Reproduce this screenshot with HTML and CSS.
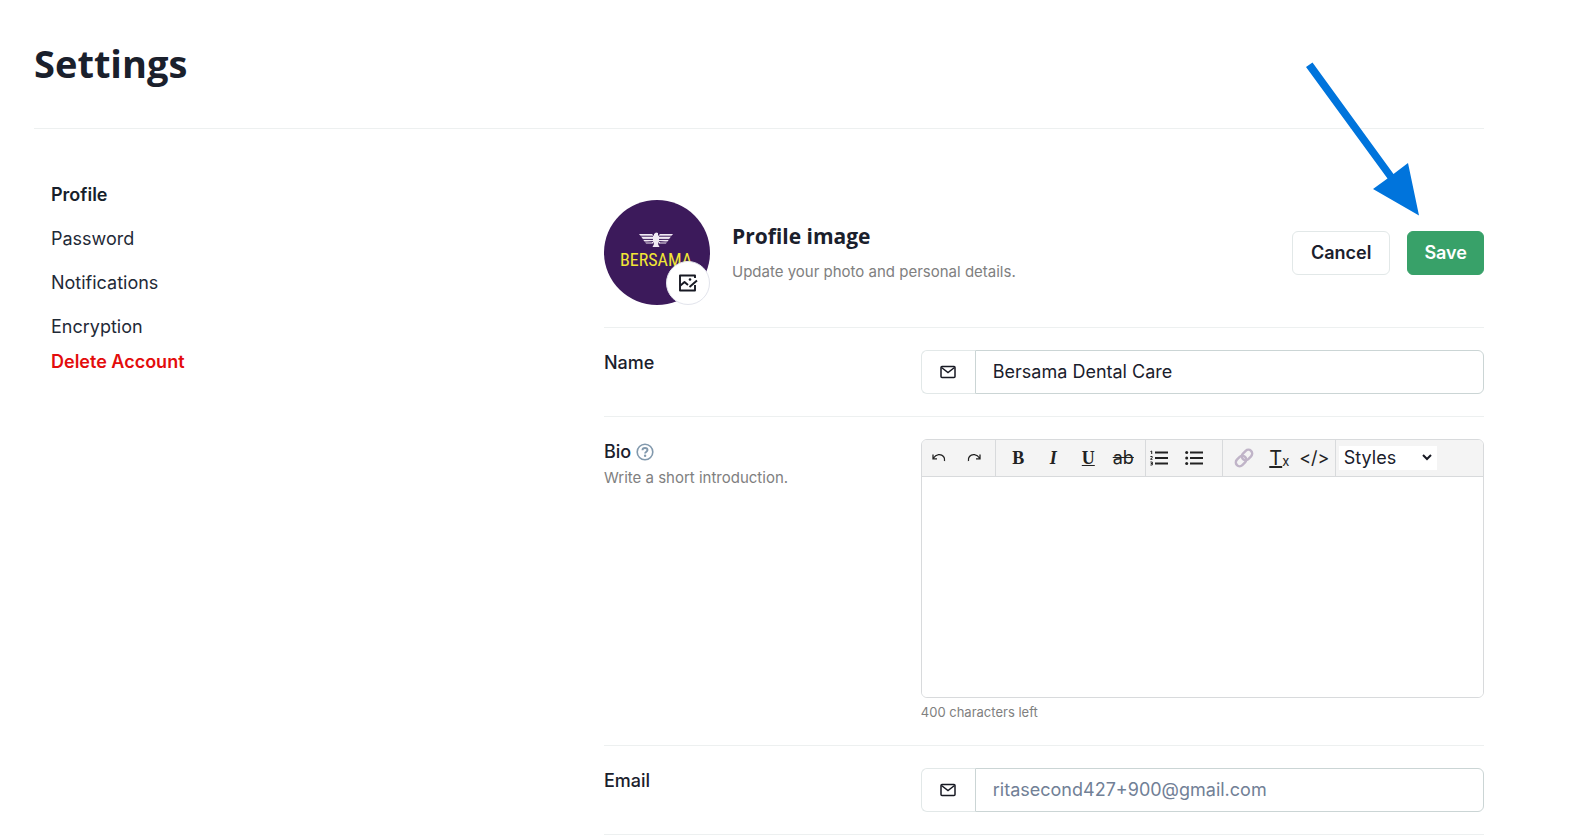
FILE: index.html
```html
<!DOCTYPE html>
<html lang="en">
<head>
<meta charset="utf-8">
<title>Settings</title>
<link rel="stylesheet" href="styles.css">
</head>
<body>
<div class="page">
  <header class="page-header"><h1>Settings</h1></header>
  <div class="layout">
    <nav class="nav" aria-label="Settings sections">
      <a class="nav-link active" href="#profile">Profile</a>
      <a class="nav-link" href="#password">Password</a>
      <a class="nav-link" href="#notifications">Notifications</a>
      <a class="nav-link" href="#encryption">Encryption</a>
      <a class="nav-link danger" href="#delete">Delete Account</a>
    </nav>
    <main class="content">
      <section class="profile">
        <div class="avatar">
          <svg class="avatar-logo" viewBox="0 0 106 105" role="img" aria-label="Bersama">
            <ellipse cx="53" cy="52.500" rx="53" ry="52.500" fill="#3c1a5b"/>
            <g fill="#f1eaf4">
              <path d="M35 34h13l3 3v2H39zM38 37.500h1l10 2.500v1H40zM40 40.500l9 1.500v1.500h-7z"/>
              <path d="M69 34H56l-3 3v2h12zM66 37.500h-1L55 40v1h9zM64 40.500L55 42v1.500h7z"/>
              <path d="M50 34l2-1.500 2 .5v4l2 2-2 5h-4l-2-5 2-2z"/>
              <path d="M50.500 43h3l2 4h-7z"/>
            </g>
            <g stroke="#3c1a5b" stroke-width="1"><path d="M36 36.200h13M39 39.400h10M68 36.200H55M65 39.400H55M41 42h7M63 42h-7"/></g>
            <text class="logo-text" x="52" y="66" text-anchor="middle">BERSAMA</text>
          </svg>
          <button class="avatar-edit" type="button" aria-label="Change image">
            <svg width="20" height="18" viewBox="0 0 20 18" fill="none" stroke="#171923" stroke-width="1.900" stroke-linejoin="round">
              <path d="M17 4V1.500H2v15h15V11"/>
              <path d="M2.500 11.500l4-3.500 3.500 3"/>
              <path d="M11.500 13l7.500-6.500"/>
              <circle cx="12" cy="5.500" r="1.300" fill="#171923" stroke="none"/>
            </svg>
          </button>
        </div>
        <div class="profile-text">
          <h2>Profile image</h2>
          <p class="hint">Update your photo and personal details.</p>
        </div>
        <div class="actions">
          <button class="btn" type="button">Cancel</button>
          <button class="btn primary" type="button">Save</button>
          <svg class="arrow" width="120" height="156" viewBox="0 0 120 156" fill="#0074dc" aria-hidden="true">
            <path d="M6 7l6.500-4.500L93.500 114l14.500-11 11 52.500L73 129l14.500-10.500z"/>
          </svg>
        </div>
      </section>

      <div class="row">
        <div class="row-label"><label for="name">Name</label></div>
        <div class="field">
          <span class="addon"><svg width="16" height="14" viewBox="0 0 16 14" fill="none" stroke="#171923" stroke-width="1.500"><rect x="1" y="1.500" width="14" height="11" rx="1"/><path d="M1.500 2.500L8 7.500l6.500-5"/></svg></span>
          <input id="name" type="text" value="Bersama Dental Care">
        </div>
      </div>

      <div class="row">
        <div class="row-label">
          <label for="bio">Bio
            <svg class="help" width="18" height="18" viewBox="0 0 18 18" fill="none" stroke="#8299ad" aria-hidden="true"><circle cx="9" cy="9" r="7.800" stroke-width="1.600"/><path d="M6.500 7.200C6.500 5.700 7.600 5 9 5s2.500.8 2.500 2.100C11.500 8.700 9.100 8.700 9.100 10.600" stroke-width="1.900"/><circle cx="9.100" cy="12.800" r="1.200" fill="#8299ad" stroke="none"/></svg>
          </label>
          <p class="hint">Write a short introduction.</p>
        </div>
        <div>
          <div class="editor">
            <div class="toolbar">
              <div class="group history">
                <button type="button" aria-label="Undo"><svg width="14" height="10" viewBox="0 0 14 10" fill="none" stroke="#222" stroke-width="1.300"><path d="M1.500 5C4 1 9 .5 11.500 3.500c1.500 1.700 1.300 3 1 4.500M1 1.500v4.300h4"/></svg></button>
                <button type="button" aria-label="Redo"><svg width="14" height="10" viewBox="0 0 14 10" fill="none" stroke="#222" stroke-width="1.300"><path d="M12.500 5C10 1 5 .5 2.500 3.500 1 5.200 1.200 6.500 1.500 8M13 1.500v4.300H9"/></svg></button>
              </div>
              <div class="group inline">
                <button class="bold" type="button" aria-label="Bold">B</button>
                <button class="italic" type="button" aria-label="Italic">I</button>
                <button class="underline" type="button" aria-label="Underline">U</button>
                <button class="strike" type="button" aria-label="Strikethrough">ab</button>
              </div>
              <div class="group lists">
                <button type="button" aria-label="Numbered list"><svg width="18" height="16" viewBox="0 0 18 16" fill="none" stroke="#222"><path d="M5 2.500h13M5 8h13M5 13.500h13" stroke-width="1.800"/><path d="M.5 1.500L1.700 1v3M.4 6.500h1.800v1L.5 9.300h2M.4 12h1.900v3H.4M.8 13.500h1.500" stroke-width="1"/></svg></button>
                <button type="button" aria-label="Bulleted list"><svg width="18" height="16" viewBox="0 0 18 16" fill="#222"><path d="M5 1.600h13v1.800H5zM5 7.100h13v1.800H5zM5 12.600h13v1.800H5z"/><circle cx="1.700" cy="2.500" r="1.500"/><circle cx="1.700" cy="8" r="1.500"/><circle cx="1.700" cy="13.500" r="1.500"/></svg></button>
              </div>
              <div class="group insert">
                <button type="button" aria-label="Link"><svg width="20" height="20" viewBox="0 0 20 20" fill="none" stroke="#c0b4c8" stroke-width="2.400"><g transform="rotate(-45 10 10)"><rect x="0" y="6.200" width="11.500" height="7.600" rx="3.800"/><rect x="8.500" y="6.200" width="11.500" height="7.600" rx="3.800"/></g></svg></button>
                <button class="clear" type="button" aria-label="Clear formatting"><span>T</span><small>x</small></button>
                <button class="code" type="button" aria-label="Source code">&lt;/&gt;</button>
              </div>
              <div class="styles">
                <select aria-label="Styles"><option>Styles</option></select>
                <svg class="chevron" width="10" height="7" viewBox="0 0 10 7" fill="none" stroke="#171923" stroke-width="2" aria-hidden="true"><path d="M1 1l4 4 4-4"/></svg>
              </div>
            </div>
            <textarea id="bio"></textarea>
          </div>
          <p class="counter">400 characters left</p>
        </div>
      </div>

      <div class="row">
        <div class="row-label"><label for="email">Email</label></div>
        <div class="field">
          <span class="addon"><svg width="16" height="14" viewBox="0 0 16 14" fill="none" stroke="#171923" stroke-width="1.500"><rect x="1" y="1.500" width="14" height="11" rx="1"/><path d="M1.500 2.500L8 7.500l6.500-5"/></svg></span>
          <input id="email" type="email" placeholder="ritasecond427+900@gmail.com">
        </div>
      </div>
    </main>
  </div>
</div>
</body>
</html>
```
FILE: styles.css
```css
* { box-sizing: border-box; }
body {
  margin: 0;
  background: #fff;
  color: #1a202c;
  font: 400 18px/26px Inter, sans-serif;
}
h1, h2, p { margin: 0; }
button, input, select, textarea { font: inherit; color: inherit; margin: 0; }
svg { display: block; }

.page { padding: 36px 93px 0 34px; }
.page-header { padding-bottom: 38px; border-bottom: 1px solid #edf0f0; }
h1, h2 { font-family: "Open Sans", "Noto Sans", sans-serif; font-weight: 700; }
h1 { font-size: 38px; line-height: 54px; }
h2 { font-size: 21px; line-height: 30px; }

.layout {
  display: grid;
  grid-template-columns: minmax(0, 570fr) minmax(0, 880fr);
  padding-top: 44px;
}
.nav { display: flex; flex-direction: column; padding-left: 17px; }
.nav-link { color: #1f2a37; line-height: 44px; text-decoration: none; }
.nav-link.active { color: #171f2b; font-weight: 600; }
.nav-link.danger { color: #e30c0c; font-weight: 600; line-height: 26px; }

.profile {
  display: flex;
  align-items: center;
  gap: 22px;
  padding: 27px 0 22px;
  border-bottom: 1px solid #edf0f0;
}
.avatar { position: relative; width: 106px; }
.avatar-logo { width: 100%; }
.logo-text { fill: #f2e635; font: 400 18px "Liberation Sans Narrow", "Roboto Condensed", Roboto, sans-serif; }
.avatar-edit {
  position: absolute;
  right: 0;
  bottom: 0;
  display: grid;
  place-items: center;
  width: 44px;
  height: 44px;
  padding: 0;
  border: 1px solid #e2e4ec;
  border-radius: 50%;
  background: #fff;
}
.profile-text { flex: 1; }
.profile-text .hint { margin-top: 8px; }
.hint { color: #808080; font-size: 15px; }

.actions { position: relative; display: flex; gap: 17px; }
.btn {
  height: 44px;
  padding: 0 18px;
  border: 1px solid #e2e8e8;
  border-radius: 6px;
  background: #fff;
  font-weight: 600;
}
.btn.primary { padding: 0 16px; border-color: #38a169; background: #38a169; color: #fff; }
.arrow { position: absolute; right: 64px; bottom: 59px; }

.row {
  display: grid;
  grid-template-columns: minmax(0, 36fr) minmax(0, 64fr);
  padding: 22px 0;
  border-bottom: 1px solid #edf0f0;
}
.row-label label { display: flex; align-items: center; gap: 5px; font-weight: 500; }

.field { display: flex; height: 44px; }
.addon {
  display: grid;
  place-items: center;
  width: 54px;
  border: 1px solid #e2e8e8;
  border-right: 0;
  border-radius: 6px 0 0 6px;
}
.field input {
  flex: 1;
  min-width: 0;
  padding: 0 17px;
  border: 1px solid #cbd5d5;
  border-radius: 0 6px 6px 0;
  background: #fff;
}
.field input::placeholder { color: #718096; opacity: 1; }

.editor { overflow: hidden; border: 1px solid #d8dadc; border-radius: 6px; }
.toolbar { display: flex; height: 37px; border-bottom: 1px solid #d8dadc; background: #f4f4f4; }
.group { display: flex; align-items: center; border-right: 1px solid #d8dadc; }
.group button {
  display: flex;
  align-items: center;
  justify-content: center;
  width: 35px;
  height: 32px;
  padding: 0;
  border: 0;
  background: none;
  color: #222;
}
.history { padding-right: 3px; }
.inline { padding: 0 4px 0 5px; }
.lists { padding-right: 15px; gap: 9px; }
.lists button { width: 26px; }
.insert { padding: 0 3px 0 4px; }
.group .bold, .group .italic, .group .underline { font-family: "Liberation Serif", serif; font-weight: 700; }
.italic { font-style: italic; }
.underline { text-decoration: underline; }
.strike { text-decoration: line-through; }
.clear span { text-decoration: underline; font-size: 20px; }
.clear small { font-size: 13px; padding-top: 6px; }

.styles { position: relative; align-self: center; margin-left: 3px; }
.styles select {
  appearance: none;
  display: block;
  width: 98px;
  height: 24px;
  padding: 0 5px;
  border: 0;
  border-radius: 0;
  background: #fff;
  line-height: 24px;
}
.chevron { position: absolute; right: 5px; top: 8px; pointer-events: none; }

textarea { display: block; width: 100%; height: 220px; padding: 12px; border: 0; outline: 0; resize: none; background: #fff; }
.counter { padding-top: 3px; color: #808080; font-size: 13px; line-height: 22px; }
```
